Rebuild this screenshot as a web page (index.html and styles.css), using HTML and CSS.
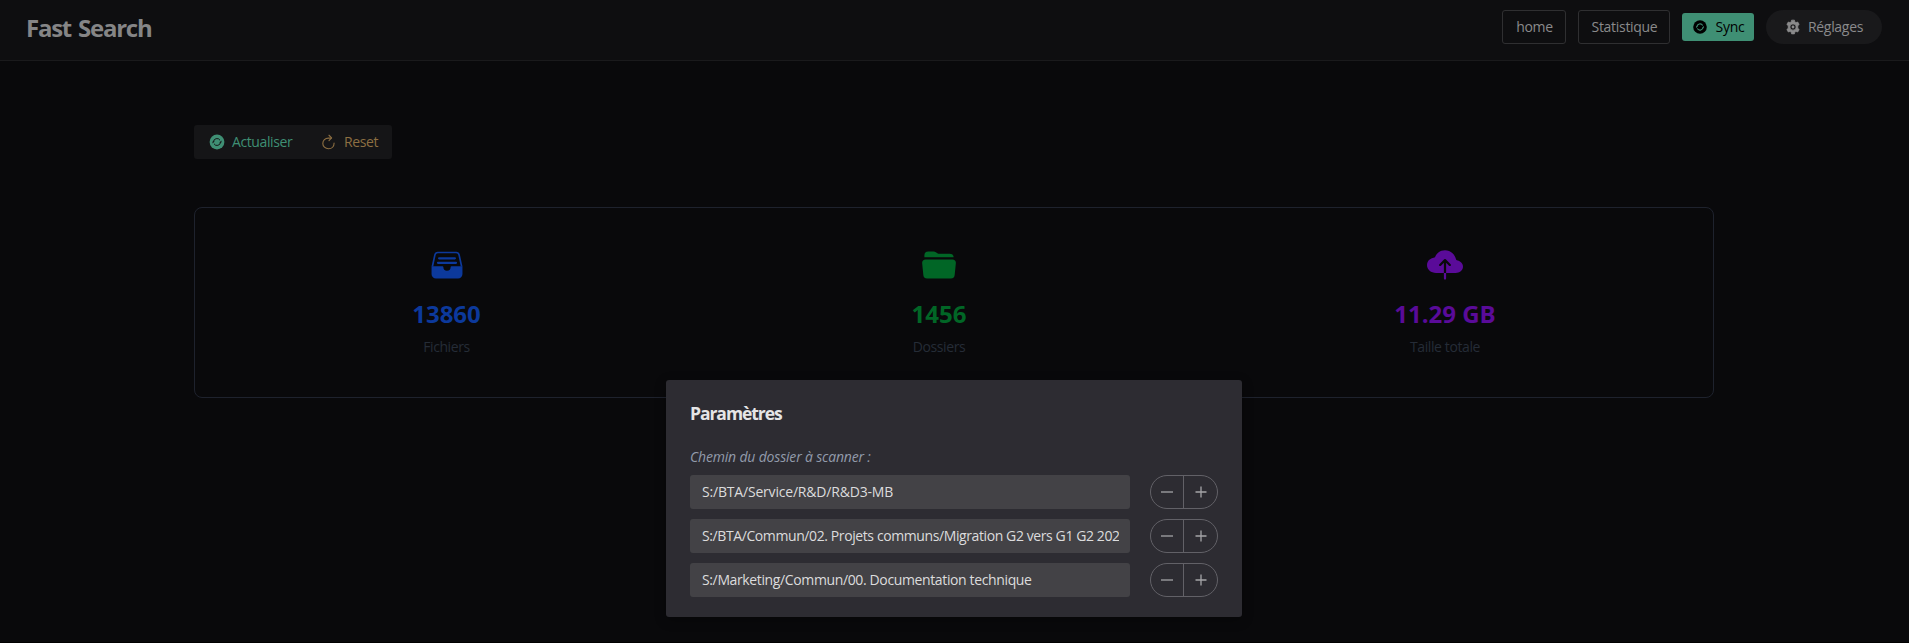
FILE: index.html
```
<!DOCTYPE html>
<html lang="fr">
<head>
<meta charset="utf-8">
<title>Fast Search</title>
<link rel="stylesheet" href="styles.css">
</head>
<body>
<header class="topbar">
  <h1 class="brand"><span class="t">Fast Search</span></h1>
  <nav class="nav">
    <button class="btn outline home"><span class="t">home</span></button>
    <button class="btn outline stat"><span class="t">Statistique</span></button>
    <button class="btn sync">
      <svg class="icon" viewBox="0 0 512 512"><circle cx="256" cy="256" r="218" fill="#000"/><g fill="none" stroke="#3f8f74" stroke-width="34"><path d="M156 256a100 100 0 0 1 186-50M356 256a100 100 0 0 1-186 50"/></g><path fill="#3f8f74" d="M384 222v50h-56zM128 290v-50h56z"/></svg>
      <span class="t">Sync</span>
    </button>
    <button class="btn round">
      <svg class="icon gear" viewBox="0 0 512 512"><path fill="#8a8a8b" fill-rule="evenodd" stroke="#8a8a8b" stroke-width="24" stroke-linejoin="round" d="M210 36h92l12 58 36 21 57-19 46 80-44 39v82l44 39-46 80-57-19-36 21-12 58h-92l-12-58-36-21-57 19-46-80 44-39v-82l-44-39 46-80 57 19 36-21zM256 156a100 100 0 1 0 0 200 100 100 0 0 0 0-200z"/><circle cx="256" cy="256" r="46" fill="#8a8a8b"/></svg>
      <span class="t">Réglages</span>
    </button>
  </nav>
</header>
<main class="content">
  <div class="actions">
    <button class="btn action refresh">
      <svg class="icon" viewBox="0 0 512 512"><circle cx="256" cy="256" r="210" fill="#3f8f74"/><g fill="none" stroke="#151517" stroke-width="28"><path d="M156 256a100 100 0 0 1 186-50M356 256a100 100 0 0 1-186 50"/></g><path fill="#151517" d="M384 216v56h-62zM128 296v-56h62z"/></svg>
      <span class="t">Actualiser</span>
    </button>
    <button class="btn action reset">
      <svg class="icon" viewBox="0 0 512 512"><g fill="none" stroke="#8d6f42" stroke-width="32" stroke-linecap="round"><path stroke-miterlimit="10" d="M400 288c0 88-60 160-156 160S80 376 80 296s66-152 160-152h80"/><path stroke-linejoin="round" d="M256 64l74 76-74 76"/></g></svg>
      <span class="t">Reset</span>
    </button>
  </div>
  <section class="stats">
    <div class="stat-item files">
      <svg class="stat-icon" viewBox="0 0 512 512"><g fill="none" stroke="currentColor" stroke-width="24"><path d="M48 278 84 112q8-34 42-34h260q34 0 42 34l36 166" /></g><path fill="currentColor" d="M144 144h224a16 16 0 0 1 0 32H144a16 16 0 0 1 0-32zM128 208h256a16 16 0 0 1 0 32H128a16 16 0 0 1 0-32zM36 272h156c8 0 12 6 12 14a52 52 0 0 0 104 0c0-8 4-14 12-14h156v112a64 64 0 0 1-64 64H100a64 64 0 0 1-64-64z"/></svg>
      <div class="value"><span class="t">13860</span></div>
      <div class="label"><span class="t">Fichiers</span></div>
    </div>
    <div class="stat-item folders">
      <svg class="stat-icon" viewBox="0 0 512 512"><path fill="currentColor" d="M408 96H252.110a23.890 23.890 0 0 1-13.310-4L211 73.410A55.770 55.770 0 0 0 179.890 64H104a56.060 56.060 0 0 0-56 56v24h416c0-30.880-25.120-48-56-48zM423.750 448H88.250a56 56 0 0 1-55.930-55.150L16.180 228.110v-.28A48 48 0 0 1 64 176h384.100a48 48 0 0 1 47.800 51.830v.28l-16.220 164.740A56 56 0 0 1 423.750 448z"/></svg>
      <div class="value"><span class="t">1456</span></div>
      <div class="label"><span class="t">Dossiers</span></div>
    </div>
    <div class="stat-item size">
      <svg class="stat-icon" viewBox="0 0 512 512"><path fill="currentColor" d="M473.660 210c-14-10.380-31.200-18-49.360-22a16.110 16.110 0 0 1-12.190-12.220c-7.800-34.750-24.590-64.550-49.270-87.130C334.150 62.250 296.210 47.790 256 47.790c-35.350 0-68 11.080-94.370 32.050a149.070 149.070 0 0 0-45.290 60 15.940 15.940 0 0 1-11.360 9.260c-26 5.160-49.410 14.880-67.100 28.270C13.120 196 0 223.410 0 256c0 69 58 112 128 112h112V225.150l-41.170 41.160a16 16 0 0 1-22.630-22.620l68.490-68.500a16 16 0 0 1 22.620 0l68.490 68.500a16 16 0 0 1-22.630 22.620L272 225.150V368h136c54 0 104-35 104-88.500 0-28.500-13-52-38.340-69.500zM240 368h32v80a16 16 0 0 1-32 0z"/></svg>
      <div class="value"><span class="t">11.29 GB</span></div>
      <div class="label"><span class="t">Taille totale</span></div>
    </div>
  </section>
</main>
<div class="modal">
  <h2 class="modal-title"><span class="t">Paramètres</span></h2>
  <p class="hint"><span class="t">Chemin du dossier à scanner :</span></p>
  <div class="rows">
    <div class="row">
      <div class="input"><span class="clip p1">S:/BTA/Service/R&amp;D/R&amp;D3-MB</span></div>
      <div class="group"><button class="minus"><svg viewBox="0 0 14 14"><path d="M1 7h12"/></svg></button><button class="plus"><svg viewBox="0 0 14 14"><path d="M1.500 7h11M7 1.500v11"/></svg></button></div>
    </div>
    <div class="row">
      <div class="input"><span class="clip p2">S:/BTA/Commun/02. Projets communs/Migration G2 vers G1 G2 202</span></div>
      <div class="group"><button class="minus"><svg viewBox="0 0 14 14"><path d="M1 7h12"/></svg></button><button class="plus"><svg viewBox="0 0 14 14"><path d="M1.500 7h11M7 1.500v11"/></svg></button></div>
    </div>
    <div class="row">
      <div class="input"><span class="clip p3">S:/Marketing/Commun/00. Documentation technique</span></div>
      <div class="group"><button class="minus"><svg viewBox="0 0 14 14"><path d="M1 7h12"/></svg></button><button class="plus"><svg viewBox="0 0 14 14"><path d="M1.500 7h11M7 1.500v11"/></svg></button></div>
    </div>
  </div>
</div>
</body>
</html>
```
FILE: styles.css
```
* { box-sizing: border-box; }
html, body { height: 100%; }
body {
  margin: 0;
  overflow: hidden;
  background: #09090b;
  border-bottom: 1px solid #000;
  color: #8a8a8b;
  font: 14px/22px "Open Sans", "Noto Sans", sans-serif;
}
h1, h2, p { margin: 0; }
button { font: inherit; color: inherit; background: none; border: 0; padding: 0; margin: 0; }
.t { white-space: nowrap; }

.topbar {
  display: flex;
  justify-content: space-between;
  align-items: flex-start;
  height: 61px;
  padding: 10px 27px 0 26px;
  background: #0e0e10;
  border-bottom: 1px solid #1a1a1c;
}
.brand { font-size: 24px; line-height: 36px; font-weight: 700; color: #858586; letter-spacing: -1.250px; word-spacing: 2px; }
.nav { display: flex; align-items: center; gap: 12px; }
.btn { display: flex; align-items: center; justify-content: center; height: 34px; border-radius: 3px; letter-spacing: -0.300px; white-space: nowrap; }
.nav .t { padding-left: 1px; }
.outline { border: 1px solid #2f2f31; }
.home { width: 64px; }
.stat { width: 92px; }
.sync { width: 72px; height: 28px; background: #3f8f74; color: #000; gap: 7px; }
.round { width: 116px; border-radius: 17px; background: #19191b; gap: 6px; }
.icon { width: 16px; height: 16px; display: block; flex: none; }

.content { padding: 64px 195px 0 194px; }
.actions { display: flex; width: 198px; height: 34px; background: #151517; border-radius: 3px; }
.action { gap: 6px; justify-content: flex-start; padding-left: 14px; }
.action .icon { width: 18px; height: 18px; }
.refresh { width: 113px; color: #3f8f74; letter-spacing: -0.400px; }
.reset { width: 85px; padding-left: 13px; color: #8d6f42; letter-spacing: -0.400px; }

.stats {
  display: flex;
  justify-content: space-around;
  width: 1520px;
  height: 191px;
  margin-top: 48px;
  padding: 39px 3px 0 0;
  border: 1px solid #1e222d;
  border-radius: 8px;
}
.stat-item { display: flex; flex-direction: column; align-items: center; }
.files { width: 73px; color: #0c399c; }
.folders { width: 52px; color: #016626; }
.size { width: 100px; color: #5a0b99; }
.stat-icon { width: 36px; height: 36px; display: block; }
.value { margin-top: 15px; font-size: 24px; line-height: 32px; font-weight: 700; }
.label { margin-top: 7px; line-height: 20px; color: #252c37; letter-spacing: -0.400px; white-space: nowrap; }

.modal {
  position: absolute;
  left: 666px;
  top: 380px;
  width: 576px;
  height: 237px;
  padding: 20px 24px 24px;
  background: #2d2c32;
  border-radius: 3px;
  box-shadow: 0 3px 12px rgba(0, 0, 0, .3);
}
.modal-title { margin-top: -1px; font-size: 17.500px; line-height: 28px; font-weight: 700; color: #e5e5e6; letter-spacing: -1.050px; }
.hint { margin-top: 20px; line-height: 20px; font-style: italic; color: #929bab; letter-spacing: -0.180px; }
.rows { display: flex; flex-direction: column; gap: 10px; margin-top: 8px; }
.row { display: flex; justify-content: space-between; height: 34px; }
.input { display: flex; align-items: center; width: 440px; padding: 0 11px 0 12px; border-radius: 3px; background: #434246; color: #dcdcdd; }
.clip { display: block; overflow: hidden; white-space: nowrap; }
.p1 { letter-spacing: -0.190px; }
.p2 { letter-spacing: -0.400px; }
.p3 { letter-spacing: -0.370px; }
.group { display: flex; width: 68px; border: 1px solid #626167; border-radius: 17px; }
.group button { display: flex; align-items: center; justify-content: center; }
.minus { width: 33px; border-right: 1px solid #626167; }
.plus { width: 34px; padding-left: 2px; }
.group svg { width: 14px; height: 14px; fill: none; stroke: #a5a5a8; stroke-width: 1.300; }
```
